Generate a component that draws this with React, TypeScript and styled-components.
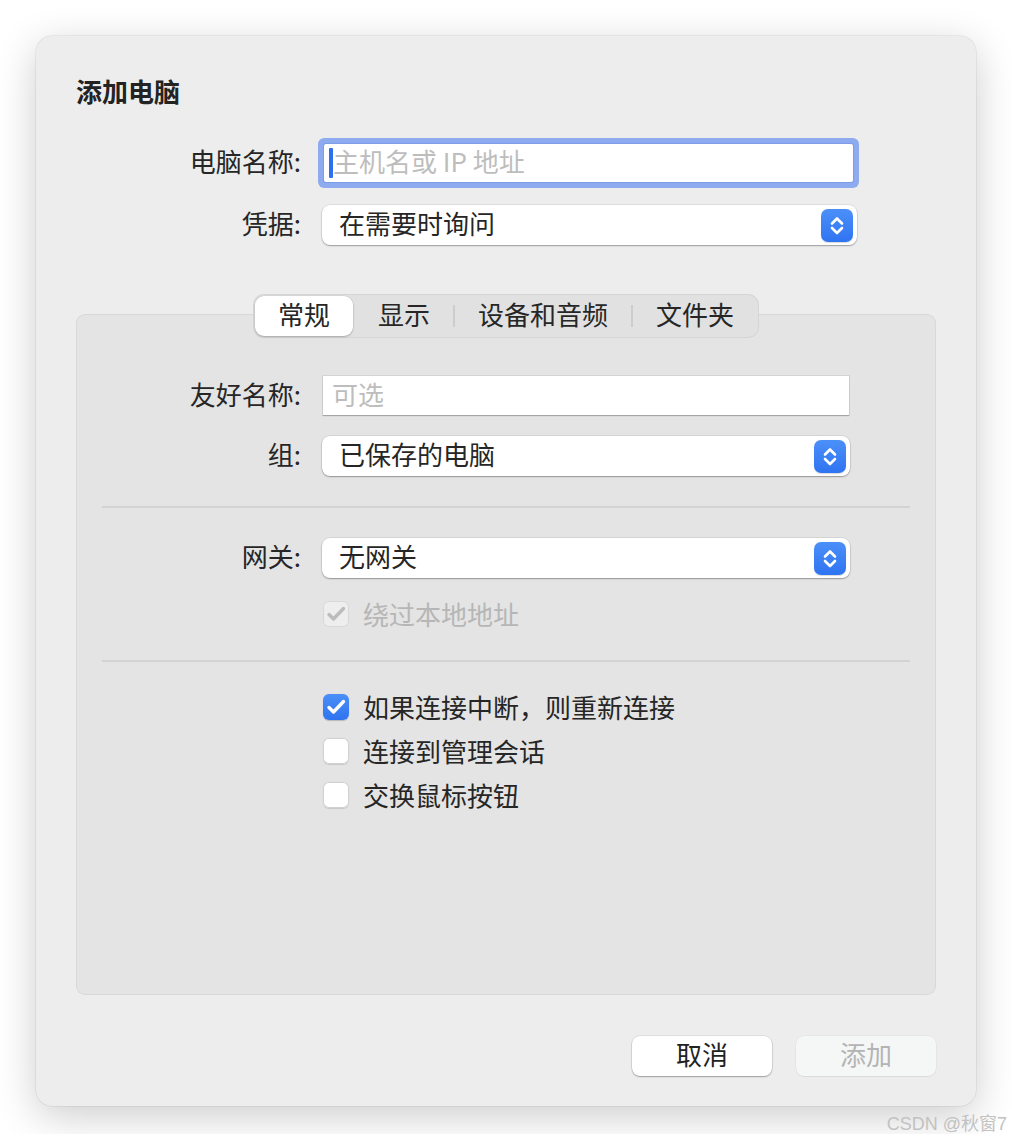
import React from "react";
import styled, { createGlobalStyle, css } from "styled-components";

const FONT = `"Noto Sans CJK SC", "Noto Sans", "Liberation Sans", sans-serif`;

const GlobalStyle = createGlobalStyle`
  html, body { margin: 0; padding: 0; background: #ffffff; }
  body { font-family: ${FONT}; color: #262626; -webkit-font-smoothing: antialiased; }
  * { box-sizing: border-box; }
`;

const Page = styled.div`
  width: 1012px;
  padding-top: 36px;
`;

const Window = styled.div`
  margin: 0 36px;
  height: 1070px;
  background: #ecedec;
  border-radius: 16px;
  padding: 39px 40px 30px;
  display: flex;
  flex-direction: column;
  box-shadow: 0 0 0 0.5px rgba(0, 0, 0, 0.1), 0 10px 40px rgba(0, 0, 0, 0.2);
`;

const Title = styled.h1`
  margin: 0;
  font-size: 26px;
  line-height: 32px;
  font-weight: 700;
  color: #232323;
`;

const Form = styled.div`
  display: flex;
  flex-direction: column;
  margin-top: 37px;
`;

const FieldRow = styled.div<{ $mt?: number }>`
  display: flex;
  align-items: center;
  gap: 21px;
  margin-top: ${(p) => p.$mt ?? 0}px;
`;

const Label = styled.div<{ $w: number }>`
  width: ${(p) => p.$w}px;
  flex: none;
  text-align: right;
  font-size: 26px;
  line-height: 32px;
  padding-bottom: 4px;
  color: #262626;
`;

const TextField = styled.div<{ $w: number; $h: number; $focused?: boolean; $ml?: number }>`
  width: ${(p) => p.$w}px;
  height: ${(p) => p.$h}px;
  margin-left: ${(p) => p.$ml ?? 0}px;
  background: #ffffff;
  display: flex;
  align-items: center;
  font-size: 26px;
  line-height: 32px;
  ${(p) =>
    p.$focused
      ? css`
          padding-left: 5px;
          border-radius: 2px;
          box-shadow: 0 0 0 1px #7d9de8, 0 0 0 6px #8eabef;
        `
      : css`
          padding-left: 9px;
          box-shadow: 0 0 0 1px rgba(0, 0, 0, 0.07), 0 1px 1px rgba(0, 0, 0, 0.22);
        `}
`;

const Caret = styled.span`
  display: inline-block;
  width: 4px;
  height: 30px;
  border-radius: 1px;
  background: #2e6ff2;
  flex: none;
`;

const Placeholder = styled.span`
  color: #bdbdbd;
  white-space: nowrap;
  padding-bottom: 4px;
`;

const Select = styled.div<{ $w: number }>`
  width: ${(p) => p.$w}px;
  height: 40px;
  background: #ffffff;
  border-radius: 8px;
  display: flex;
  align-items: center;
  justify-content: space-between;
  padding: 0 4px 0 17px;
  box-shadow: 0 0 0 0.5px rgba(0, 0, 0, 0.12), 0 1px 1.5px rgba(0, 0, 0, 0.3);
  font-size: 26px;
  line-height: 32px;
  color: #262626;
`;

const SelectText = styled.span`
  padding-bottom: 4px;
`;

const StepperBox = styled.div`
  width: 32px;
  height: 33px;
  border-radius: 7px;
  background: linear-gradient(#4b90f8, #2f74f1);
  display: flex;
  align-items: center;
  justify-content: center;
  box-shadow: 0 0.5px 1px rgba(0, 0, 0, 0.15);
`;

const Stepper = () => (
  <StepperBox>
    <svg width="32" height="33" viewBox="0 0 32 33">
      <path
        d="M11 14.5 L16 9.5 L21 14.5 M11 19 L16 24 L21 19"
        fill="none"
        stroke="#ffffff"
        strokeWidth="2.6"
        strokeLinecap="round"
        strokeLinejoin="round"
      />
    </svg>
  </StepperBox>
);

const SegWrap = styled.div`
  display: flex;
  justify-content: center;
  margin-top: 49px;
  margin-bottom: -24px;
  position: relative;
  z-index: 1;
`;

const Segmented = styled.div`
  height: 44px;
  display: flex;
  align-items: center;
  padding: 0 2px;
  border-radius: 11px;
  background: #e0e1e0;
  box-shadow: inset 0 0 0 1px rgba(0, 0, 0, 0.05);
`;

const Segment = styled.div<{ $active?: boolean }>`
  height: 40px;
  padding: 0 23px 5px;
  display: flex;
  align-items: center;
  font-size: 26px;
  line-height: 32px;
  color: #262626;
  border-radius: 9px;
  ${(p) =>
    p.$active &&
    css`
      background: #ffffff;
      box-shadow: 0 0 0 0.5px rgba(0, 0, 0, 0.08), 0 1px 2px rgba(0, 0, 0, 0.22);
    `}
`;

const SegDivider = styled.div<{ $hidden?: boolean }>`
  width: 2px;
  height: 22px;
  background: ${(p) => (p.$hidden ? "transparent" : "#cdcdcd")};
  flex: none;
`;

const Panel = styled.div`
  height: 681px;
  background: #e4e4e4;
  border-radius: 9px;
  box-shadow: inset 0 0 0 1px rgba(0, 0, 0, 0.05);
  padding: 62px 26px 0;
  display: flex;
  flex-direction: column;
`;

const Divider = styled.div<{ $mt: number; $mb: number }>`
  height: 2px;
  background: #d3d3d3;
  margin-top: ${(p) => p.$mt}px;
  margin-bottom: ${(p) => p.$mb}px;
`;

const CheckRow = styled.div<{ $mt?: number }>`
  display: flex;
  align-items: center;
  gap: 14px;
  margin-left: 221px;
  margin-top: ${(p) => p.$mt ?? 0}px;
  height: 26px;
`;

const Box = styled.div<{ $state: "on" | "off" | "disabled" }>`
  width: 26px;
  height: 26px;
  border-radius: 6px;
  flex: none;
  display: flex;
  align-items: center;
  justify-content: center;
  ${(p) =>
    p.$state === "on"
      ? css`
          background: linear-gradient(#4b8ff8, #2f73f0);
          box-shadow: 0 0.5px 1px rgba(0, 0, 0, 0.2);
        `
      : p.$state === "disabled"
      ? css`
          background: #eeeeee;
          box-shadow: inset 0 0 0 1px #d8d8d8;
        `
      : css`
          background: #ffffff;
          box-shadow: inset 0 0 0 1px #d0d0d0, 0 0.5px 1px rgba(0, 0, 0, 0.12);
        `}
`;

const CheckText = styled.span<{ $disabled?: boolean }>`
  font-size: 26px;
  line-height: 32px;
  color: ${(p) => (p.$disabled ? "#b6b6b6" : "#262626")};
  white-space: nowrap;
`;

const CheckBox = ({ state }: { state: "on" | "off" | "disabled" }) => (
  <Box $state={state}>
    {state !== "off" && (
      <svg width="26" height="26" viewBox="0 0 26 26">
        <path
          d="M6 13.5 L10.5 18 L20.5 7.5"
          fill="none"
          stroke={state === "on" ? "#ffffff" : "#bcbcbc"}
          strokeWidth="3.4"
          strokeLinecap="round"
          strokeLinejoin="round"
        />
      </svg>
    )}
  </Box>
);

const ButtonBar = styled.div`
  display: flex;
  justify-content: flex-end;
  gap: 24px;
  margin-top: 41px;
`;

const Button = styled.div<{ $variant: "normal" | "disabled" }>`
  width: 140px;
  height: 40px;
  border-radius: 8px;
  display: flex;
  align-items: center;
  justify-content: center;
  font-size: 26px;
  line-height: 32px;
  padding-bottom: 4px;
  ${(p) =>
    p.$variant === "normal"
      ? css`
          background: #ffffff;
          color: #222222;
          box-shadow: 0 0 0 0.5px rgba(0, 0, 0, 0.12), 0 1px 1.5px rgba(0, 0, 0, 0.3);
        `
      : css`
          background: #f5f6f6;
          color: #b4b4b4;
          box-shadow: 0 0 0 0.5px rgba(0, 0, 0, 0.06), 0 1px 1px rgba(0, 0, 0, 0.05);
        `}
`;

const Watermark = styled.div`
  margin-top: 8px;
  padding-right: 5px;
  text-align: right;
  font-family: "Liberation Sans", "Noto Sans CJK SC", sans-serif;
  font-size: 18px;
  line-height: 20px;
  color: #c2c2c2;
`;

export default function App() {
  return (
    <Page>
      <GlobalStyle />
      <Window>
        <Title>添加电脑</Title>
        <Form>
          <FieldRow>
            <Label $w={225}>电脑名称:</Label>
            <TextField $w={529} $h={38} $ml={2} $focused>
              <Caret />
              <Placeholder>主机名或 IP 地址</Placeholder>
            </TextField>
          </FieldRow>
          <FieldRow $mt={23}>
            <Label $w={225}>凭据:</Label>
            <Select $w={535}>
              <SelectText>在需要时询问</SelectText>
              <Stepper />
            </Select>
          </FieldRow>
        </Form>

        <SegWrap>
          <Segmented>
            <Segment $active>常规</Segment>
            <SegDivider $hidden />
            <Segment>显示</Segment>
            <SegDivider />
            <Segment>设备和音频</Segment>
            <SegDivider />
            <Segment>文件夹</Segment>
          </Segmented>
        </SegWrap>

        <Panel>
          <FieldRow>
            <Label $w={199}>友好名称:</Label>
            <TextField $w={526} $h={39} $ml={1}>
              <Placeholder>可选</Placeholder>
            </TextField>
          </FieldRow>
          <FieldRow $mt={21}>
            <Label $w={199}>组:</Label>
            <Select $w={528}>
              <SelectText>已保存的电脑</SelectText>
              <Stepper />
            </Select>
          </FieldRow>
          <Divider $mt={30} $mb={30} />
          <FieldRow>
            <Label $w={199}>网关:</Label>
            <Select $w={528}>
              <SelectText>无网关</SelectText>
              <Stepper />
            </Select>
          </FieldRow>
          <CheckRow $mt={23}>
            <CheckBox state="disabled" />
            <CheckText $disabled>绕过本地地址</CheckText>
          </CheckRow>
          <Divider $mt={33} $mb={32} />
          <CheckRow>
            <CheckBox state="on" />
            <CheckText>如果连接中断，则重新连接</CheckText>
          </CheckRow>
          <CheckRow $mt={18}>
            <CheckBox state="off" />
            <CheckText>连接到管理会话</CheckText>
          </CheckRow>
          <CheckRow $mt={18}>
            <CheckBox state="off" />
            <CheckText>交换鼠标按钮</CheckText>
          </CheckRow>
        </Panel>

        <ButtonBar>
          <Button $variant="normal">取消</Button>
          <Button $variant="disabled">添加</Button>
        </ButtonBar>
      </Window>
      <Watermark>CSDN @秋窗7</Watermark>
    </Page>
  );
}
